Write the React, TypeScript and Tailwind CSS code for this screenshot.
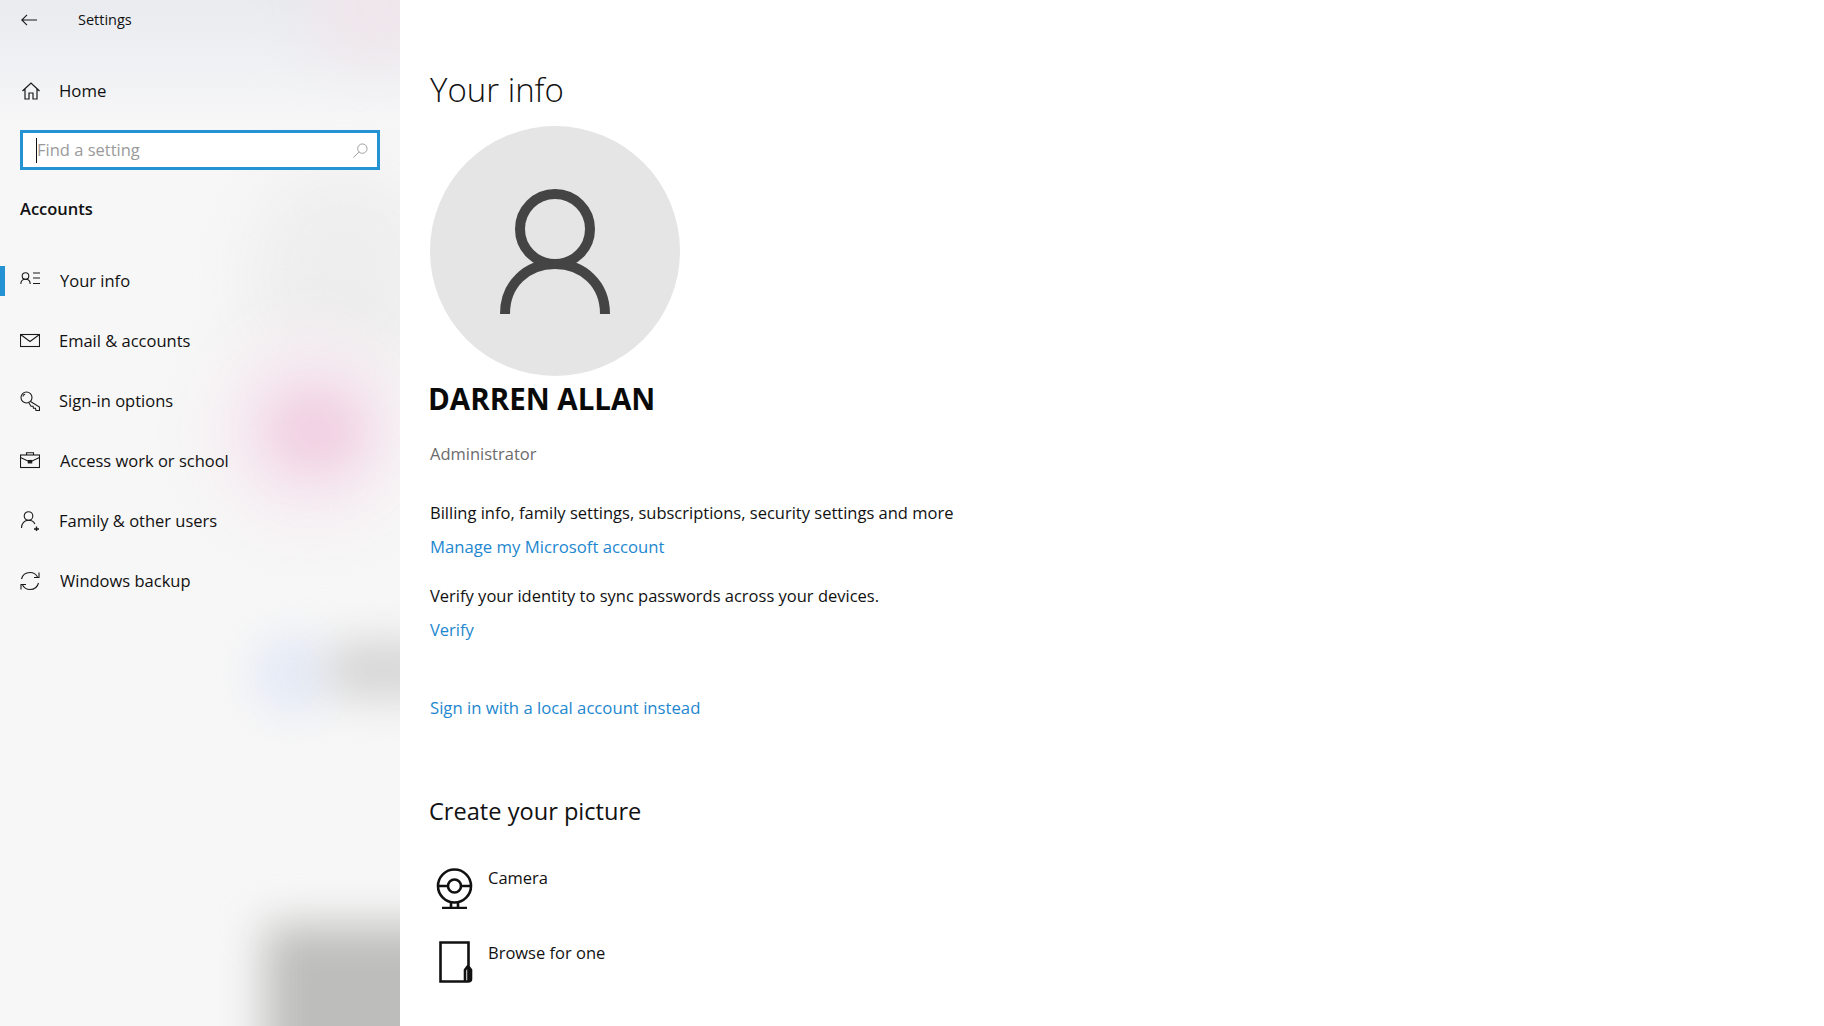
import React from 'react';

const Icon = ({ children }: { children: React.ReactNode }) => (
  <svg viewBox="0 0 20 20" fill="none" stroke="#1a1a1a" strokeWidth="1.1" className="w-5 h-5 shrink-0">
    {children}
  </svg>
);

const navItems = [
  {
    label: 'Your info',
    active: true,
    gap: 'gap-[20px]',
    icon: (
      <>
        <circle cx="5.5" cy="5" r="3.3" />
        <path d="M0.8 13c0-3 2-4.800 4.700-4.800s4.700 1.800 4.700 4.800" />
        <path d="M13 2h7M13 7h7M13 12.500h7" />
      </>
    ),
  },
  {
    label: 'Email & accounts',
    gap: 'gap-[19px]',
    icon: (
      <>
        <rect x="0.5" y="3.5" width="19" height="12" />
        <path d="M0.5 3.500 10 10.500l9.500-7" />
      </>
    ),
  },
  {
    label: 'Sign-in options',
    gap: 'gap-[19px]',
    icon: (
      <>
        <circle cx="6.500" cy="6.500" r="5.500" />
        <path d="M10.500 10.500 19.500 16v3.500h-3.500l-.5-2.200h-2l-.5-2h-2l-2-3.300" />
        <path d="M3 5.500c0-1.200 1-2.200 2.200-2.200" />
      </>
    ),
  },
  {
    label: 'Access work or school',
    gap: 'gap-[20px]',
    icon: (
      <>
        <rect x="0.5" y="4" width="19" height="12.500" />
        <path d="M6.500 4V1.800h7V4" />
        <path d="M0.500 6.500 10 11l9.500-4.500" />
        <rect x="8.300" y="9.500" width="3.400" height="2.400" fill="#1a1a1a" />
      </>
    ),
  },
  {
    label: 'Family & other users',
    gap: 'gap-[19px]',
    icon: (
      <>
        <circle cx="8.500" cy="5" r="4.300" />
        <path d="M1.500 17c0-4.500 3-7.700 7-7.700 3.200 0 5.400 1.400 6.400 3.800" />
        <path d="M16.500 15.500v5M14 18h5" strokeWidth="1.400" />
      </>
    ),
  },
  {
    label: 'Windows backup',
    gap: 'gap-[20px]',
    icon: (
      <>
        <path d="M1.500 8C2.500 4 6 1.500 10 1.500c3.200 0 6 1.600 7.500 4.500" />
        <path d="M18.500 12c-1 4-4.500 6.500-8.500 6.500-3.200 0-6-1.600-7.500-4.500" />
        <path d="M19 1.500V6.500h-5M1 18.500v-5h5" />
      </>
    ),
  },
];

const Sidebar = () => (
  <aside className="relative w-[400px] h-full shrink-0 overflow-hidden bg-[#f7f7f7]">
    {/* Blurred desktop showing through the acrylic */}
    <div className="absolute inset-x-0 top-0 h-[120px] bg-gradient-to-b from-[#e9ebef] to-[#f6f6f7]" />
    <div className="absolute -top-12 right-[-40px] w-[130px] h-[110px] rounded-full bg-[#efe6eb] blur-[25px]" />
    <div className="absolute top-[170px] right-[-40px] w-[190px] h-[210px] rounded-full bg-[#eeeeee] blur-[30px]" />
    <div className="absolute top-[335px] left-[215px] w-[190px] h-[190px] rounded-full bg-[#f6ebf1] blur-[32px]" />
    <div className="absolute top-[388px] left-[265px] w-[100px] h-[85px] rounded-full bg-[#f0cde1] blur-[26px]" />
    <div className="absolute top-[632px] left-[250px] w-[85px] h-[85px] rounded-full bg-[#e6ebf6] blur-[18px]" />
    <div className="absolute top-[640px] left-[325px] w-[120px] h-[60px] rounded-full bg-[#d6d6d6] blur-[20px]" />
    <div className="absolute top-[925px] left-[265px] w-[190px] h-[170px] bg-[#bdbdbb] blur-[22px]" />

    <div className="relative flex flex-col text-[#111]">
      <div className="flex items-center h-10 pl-[21px] text-[14.500px]">
        <svg viewBox="0 0 16 12" fill="none" stroke="#1a1a1a" strokeWidth="1.100" className="w-4 h-3 mr-[41px]">
          <path d="M16 6H1M6 .8 .8 6 6 11.200" />
        </svg>
        <span>Settings</span>
      </div>
      <div className="flex items-center h-[24px] mt-[39px] pl-[22px] gap-[19px] text-[16.800px]">
        <svg viewBox="0 0 18 18" fill="none" stroke="#1a1a1a" strokeWidth="1.200" className="w-[18px] h-[18px]">
          <path d="M.5 9 9 1l8.500 8M3 7v10h4v-6h4v6h4V7" />
        </svg>
        <span>Home</span>
      </div>
      <div className="flex items-center h-10 mx-5 mt-[27px] border-[3px] border-[#2592d3] bg-white pl-[13px] pr-[8px]">
        <span className="w-px h-[25px] bg-[#111]" />
        <span className="flex-1 text-[16.500px] text-[#9a9a9a]">Find a setting</span>
        <svg viewBox="0 0 16 16" fill="none" stroke="#9a9a9a" strokeWidth="1" className="w-[15px] h-[15px] -translate-x-px">
          <circle cx="10" cy="6" r="5" />
          <path d="M6.500 9.500 .5 15.500" />
        </svg>
      </div>
      <div className="mt-[27px] pl-5 h-6 leading-6 text-[16.500px] font-semibold">Accounts</div>
      <nav className="mt-[30px] flex flex-col">
        {navItems.map((item) => (
          <div key={item.label} className={`relative flex items-center h-[60px] pl-5 text-[16.500px] ${item.gap}`}>
            {item.active && <span className="absolute left-0 top-[15px] w-[5px] h-[30px] bg-[#2592d3]" />}
            <Icon>{item.icon}</Icon>
            <span>{item.label}</span>
          </div>
        ))}
      </nav>
    </div>
  </aside>
);

const Main = () => (
  <main className="flex-1 pl-[30px] text-[16.500px] text-[#111]">
    <h1 className="mt-[66px] h-[48px] leading-[48px] text-[33px] font-light">Your info</h1>
    <div className="mt-[12px] w-[250px] h-[250px] rounded-full bg-[#e5e5e5] flex items-center justify-center">
      <svg viewBox="0 0 110 125" fill="none" stroke="#444" strokeWidth="10" className="w-[110px] h-[125px]">
        <circle cx="55" cy="40" r="35" />
        <path d="M5 125C5 95 27 75 55 75s50 20 50 50" />
      </svg>
    </div>
    <div className="mt-[3px] h-10 leading-10 text-[29.500px] font-bold text-[#0a0a0a] -ml-[2px]">DARREN ALLAN</div>
    <div className="mt-[23px] h-6 leading-6 text-[#6b6b6b]">Administrator</div>
    <div className="mt-[35px] h-6 leading-6">Billing info, family settings, subscriptions, security settings and more</div>
    <div className="mt-[10px] h-6 leading-6 text-[16.700px] text-[#1d87cf]">Manage my Microsoft account</div>
    <div className="mt-[25px] h-6 leading-6">Verify your identity to sync passwords across your devices.</div>
    <div className="mt-[10px] h-6 leading-6 text-[#1d87cf]">Verify</div>
    <div className="mt-[54px] h-6 leading-6 text-[16.700px] text-[#1d87cf]">Sign in with a local account instead</div>
    <h2 className="mt-[75px] h-8 leading-8 text-[23.600px] -ml-[1px]">Create your picture</h2>
    <div className="mt-[40px] flex gap-[14px]">
      <svg viewBox="0 0 38 42" fill="none" stroke="#111" strokeWidth="2.600" className="ml-[6px] w-[38px] h-[42px]">
        <circle cx="18.500" cy="19" r="16.500" />
        <circle cx="18.500" cy="19" r="6.500" />
        <path d="M2 19h10M25 19h10M15 35v6M22 35v6M6 41h25" />
      </svg>
      <span className="h-6 leading-6 -mt-[1px]">Camera</span>
    </div>
    <div className="mt-[32px] flex gap-[15px]">
      <svg viewBox="0 0 34 42" fill="none" stroke="#111" strokeWidth="2.600" className="ml-[9px] w-[34px] h-[42px]">
        <path d="M1.500 1.500h28v39h-28zM26 40.500V29l3-4 3 4v9c0 2-1 2.500-3 2.500" />
      </svg>
      <span className="h-6 leading-6">Browse for one</span>
    </div>
  </main>
);

export default function App() {
  return (
    <div className="flex w-full h-screen overflow-hidden bg-white font-['Open_Sans','Noto_Sans',sans-serif]">
      <Sidebar />
      <Main />
    </div>
  );
}
